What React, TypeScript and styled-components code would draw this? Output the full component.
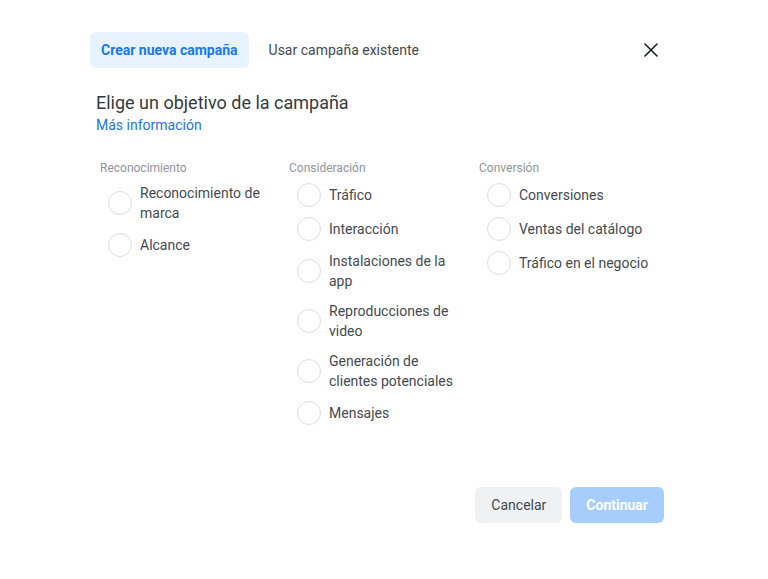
import styled, { createGlobalStyle } from 'styled-components';

const GlobalStyle = createGlobalStyle`
  body {
    margin: 0;
    background: #fff;
    font-family: Roboto, "Liberation Sans", Arial, sans-serif;
  }
`;

interface Column {
  title: string;
  options: string[];
}

const columns: Column[] = [
  { title: 'Reconocimiento', options: ['Reconocimiento de marca', 'Alcance'] },
  {
    title: 'Consideración',
    options: [
      'Tráfico',
      'Interacción',
      'Instalaciones de la app',
      'Reproducciones de video',
      'Generación de clientes potenciales',
      'Mensajes',
    ],
  },
  {
    title: 'Conversión',
    options: ['Conversiones', 'Ventas del catálogo', 'Tráfico en el negocio'],
  },
];

function App() {
  return (
    <>
      <GlobalStyle />
      <DialogStyle>
        {/* Tabs */}
        <HeaderStyle>
          <TabStyle $active>Crear nueva campaña</TabStyle>
          <TabStyle>Usar campaña existente</TabStyle>
          <CloseButton aria-label="Cerrar">
            <svg width="14" height="14" viewBox="0 0 14 14">
              <path d="M1 1L13 13M13 1L1 13" stroke="#1c1e21" strokeWidth="1.6" strokeLinecap="round" />
            </svg>
          </CloseButton>
        </HeaderStyle>

        <TitleStyle>Elige un objetivo de la campaña</TitleStyle>
        <LinkStyle href="#">Más información</LinkStyle>

        {/* Objectives */}
        <ColumnsStyle>
          {columns.map((column) => (
            <ColumnStyle key={column.title}>
              <ColumnTitle>{column.title}</ColumnTitle>
              <OptionList>
                {column.options.map((option) => (
                  <OptionStyle key={option}>
                    <Radio />
                    <OptionLabel>{option}</OptionLabel>
                  </OptionStyle>
                ))}
              </OptionList>
            </ColumnStyle>
          ))}
        </ColumnsStyle>

        {/* Footer */}
        <FooterStyle>
          <ButtonStyle>Cancelar</ButtonStyle>
          <ButtonStyle $primary disabled>
            Continuar
          </ButtonStyle>
        </FooterStyle>
      </DialogStyle>
    </>
  );
}

const DialogStyle = styled.div`
  width: 574px;
  padding: 32px 104px 0 90px;
`;

const HeaderStyle = styled.div`
  display: flex;
  align-items: center;
  height: 36px;
`;

interface TabProps {
  $active?: boolean;
}
const TabStyle = styled.div<TabProps>`
  display: flex;
  align-items: center;
  height: 36px;
  padding: 0 11px;
  margin-right: ${({ $active }) => ($active ? '9px' : '0')};
  border-radius: 6px;
  font-size: 14px;
  font-weight: ${({ $active }) => ($active ? 700 : 400)};
  color: ${({ $active }) => ($active ? '#1877f2' : '#444950')};
  background: ${({ $active }) => ($active ? '#e7f3ff' : 'transparent')};
`;

const CloseButton = styled.button`
  margin-left: auto;
  width: 28px;
  height: 28px;
  margin-right: -1px;
  border: 0;
  padding: 0;
  background: transparent;
  display: flex;
  align-items: center;
  justify-content: center;
  cursor: pointer;
`;

const TitleStyle = styled.h2`
  margin: 23px 0 0 6px;
  font-size: 18px;
  line-height: 24px;
  font-weight: 400;
  color: #343a40;
`;

const LinkStyle = styled.a`
  display: block;
  margin: 1px 0 0 6px;
  font-size: 14px;
  line-height: 18px;
  color: #1a73e8;
  text-decoration: none;
`;

const ColumnsStyle = styled.div`
  display: grid;
  grid-template-columns: 189px 190px 190px;
  margin-top: 26px;
  padding-left: 10px;
`;

const ColumnStyle = styled.div`
  display: flex;
  flex-direction: column;
`;

const ColumnTitle = styled.div`
  font-size: 12px;
  line-height: 16px;
  color: #90949c;
`;

const OptionList = styled.div`
  display: flex;
  flex-direction: column;
  gap: 10px;
  margin-top: 7px;
`;

const OptionStyle = styled.label`
  display: flex;
  align-items: center;
  padding-left: 8px;
  cursor: pointer;
`;

const Radio = styled.span`
  flex: none;
  width: 22px;
  height: 22px;
  border: 1px solid #dadde1;
  border-radius: 50%;
  background: #fff;
`;

const OptionLabel = styled.span`
  margin-left: 8px;
  max-width: 136px;
  font-size: 14px;
  line-height: 20px;
  color: #444950;
`;

const FooterStyle = styled.div`
  display: flex;
  justify-content: flex-end;
  gap: 8px;
  margin-top: 62px;
`;

interface ButtonProps {
  $primary?: boolean;
}
const ButtonStyle = styled.button<ButtonProps>`
  height: 36px;
  padding: 0 16px;
  border: 0;
  border-radius: 6px;
  font-family: inherit;
  font-size: 14px;
  font-weight: ${({ $primary }) => ($primary ? 700 : 400)};
  color: ${({ $primary }) => ($primary ? '#fff' : '#444950')};
  background: ${({ $primary }) => ($primary ? '#a6cdfb' : '#f0f1f2')};
  cursor: pointer;
`;

export default App;
